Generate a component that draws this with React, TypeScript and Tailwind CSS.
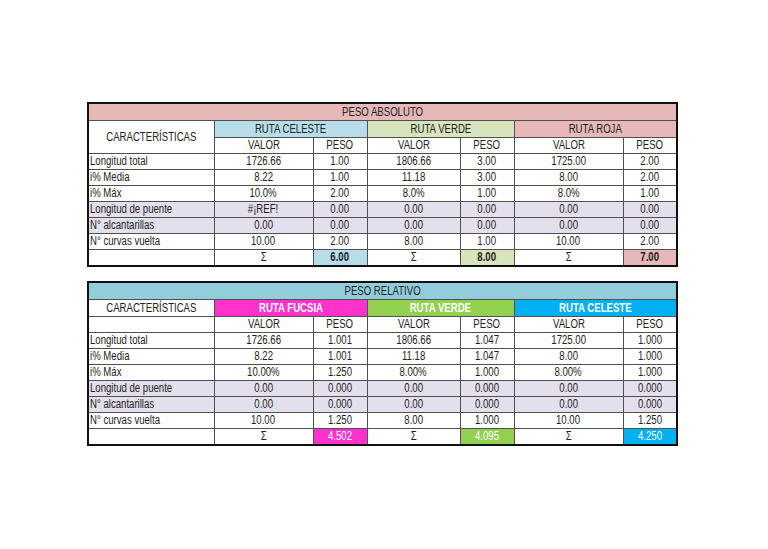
import type { ReactNode } from 'react';

type Route = { name: string; head: string; sum: string; sumCls: string };

const widths = [126, 99, 54, 93, 54, 109, 54];

const absRows = [
  { label: 'Longitud total', vals: ['1726.66', '1.00', '1806.66', '3.00', '1725.00', '2.00'] },
  { label: 'i% Media', vals: ['8.22', '1.00', '11.18', '3.00', '8.00', '2.00'] },
  { label: 'i% Máx', vals: ['10.0%', '2.00', '8.0%', '1.00', '8.0%', '1.00'] },
  { label: 'Longitud de puente', vals: ['#¡REF!', '0.00', '0.00', '0.00', '0.00', '0.00'] },
  { label: 'N° alcantarillas', vals: ['0.00', '0.00', '0.00', '0.00', '0.00', '0.00'] },
  { label: 'N° curvas vuelta', vals: ['10.00', '2.00', '8.00', '1.00', '10.00', '2.00'] },
];

const relRows = [
  { label: 'Longitud total', vals: ['1726.66', '1.001', '1806.66', '1.047', '1725.00', '1.000'] },
  { label: 'i% Media', vals: ['8.22', '1.001', '11.18', '1.047', '8.00', '1.000'] },
  { label: 'i% Máx', vals: ['10.00%', '1.250', '8.00%', '1.000', '8.00%', '1.000'] },
  { label: 'Longitud de puente', vals: ['0.00', '0.000', '0.00', '0.000', '0.00', '0.000'] },
  { label: 'N° alcantarillas', vals: ['0.00', '0.000', '0.00', '0.000', '0.00', '0.000'] },
  { label: 'N° curvas vuelta', vals: ['10.00', '1.250', '8.00', '1.000', '10.00', '1.250'] },
];

const absRoutes: Route[] = [
  { name: 'RUTA CELESTE', head: 'bg-[#b7dee8] text-[#222]', sum: '6.00', sumCls: 'bg-[#b7dee8] font-bold text-[#222]' },
  { name: 'RUTA VERDE', head: 'bg-[#d8e4bc] text-[#222]', sum: '8.00', sumCls: 'bg-[#d8e4bc] font-bold text-[#222]' },
  { name: 'RUTA ROJA', head: 'bg-[#e6b8b7] text-[#222]', sum: '7.00', sumCls: 'bg-[#e6b8b7] font-bold text-[#222]' },
];

const relRoutes: Route[] = [
  { name: 'RUTA FUCSIA', head: 'bg-[#ff33cc] text-white font-bold', sum: '4.502', sumCls: 'bg-[#ff33cc] text-white' },
  { name: 'RUTA VERDE', head: 'bg-[#92d050] text-white font-bold', sum: '4.095', sumCls: 'bg-[#92d050] text-white' },
  { name: 'RUTA CELESTE', head: 'bg-[#00b0f0] text-white font-bold', sum: '4.250', sumCls: 'bg-[#00b0f0] text-white' },
];

const cell = 'border border-[#505050] p-0 leading-none whitespace-nowrap';

// excel-ish narrow text
function N({ children, left = false }: { children: ReactNode; left?: boolean }) {
  return (
    <span className={`inline-block scale-x-[0.8] ${left ? 'origin-left' : 'origin-center'}`}>{children}</span>
  );
}

function Td({
  children,
  className = '',
  span,
}: {
  children?: ReactNode;
  className?: string;
  span?: number;
}) {
  return (
    <td colSpan={span} className={`${cell} text-center ${className}`}>
      {children !== undefined && <N>{children}</N>}
    </td>
  );
}

function Sheet({
  title,
  titleBg,
  routes,
  rows,
  merged,
}: {
  title: string;
  titleBg: string;
  routes: Route[];
  rows: { label: string; vals: string[] }[];
  merged: boolean;
}) {
  return (
    <table className="table-fixed border-collapse border-2 border-[#111] w-[591px] text-[12px] text-[#222]">
      <colgroup>
        {widths.map((w, i) => (
          <col key={i} style={{ width: w }} />
        ))}
      </colgroup>
      <tbody>
        <tr className="h-[17px]">
          <Td span={7} className={titleBg}>{title}</Td>
        </tr>
        <tr className="h-[17px]">
          {merged ? (
            <td rowSpan={2} className={`${cell} text-center`}><N>CARACTERÍSTICAS</N></td>
          ) : (
            <Td>CARACTERÍSTICAS</Td>
          )}
          {routes.map((r) => (
            <Td key={r.name} span={2} className={r.head}>{r.name}</Td>
          ))}
        </tr>
        <tr className="h-4">
          {!merged && <td className={cell}></td>}
          {routes.map((r) => [
            <Td key={r.name + 'v'}>VALOR</Td>,
            <Td key={r.name + 'p'}>PESO</Td>,
          ])}
        </tr>
        {rows.map((row, i) => {
          const shade = i === 3 || i === 4 ? 'bg-[#e4dfec]' : '';
          return (
            <tr key={row.label} className="h-4">
              <td className={`${cell} text-left pl-px ${shade}`}><N left>{row.label}</N></td>
              {row.vals.map((v, j) => (
                <Td key={j} className={shade}>{v}</Td>
              ))}
            </tr>
          );
        })}
        <tr className="h-[17px]">
          <td className={cell}></td>
          {routes.map((r) => [
            <Td key={r.name + 's'}>Σ</Td>,
            <Td key={r.name + 't'} className={r.sumCls}>{r.sum}</Td>,
          ])}
        </tr>
      </tbody>
    </table>
  );
}

export default function App() {
  return (
    <div
      className="w-[768px] h-[549px] bg-white pt-[102px] pl-[87px] flex flex-col gap-[14px]"
      style={{ fontFamily: '"Liberation Sans", Arial, sans-serif' }}
    >
      <Sheet title="PESO ABSOLUTO" titleBg="bg-[#e6b8b7]" routes={absRoutes} rows={absRows} merged />
      <Sheet title="PESO RELATIVO" titleBg="bg-[#92cddc]" routes={relRoutes} rows={relRows} merged={false} />
    </div>
  );
}
